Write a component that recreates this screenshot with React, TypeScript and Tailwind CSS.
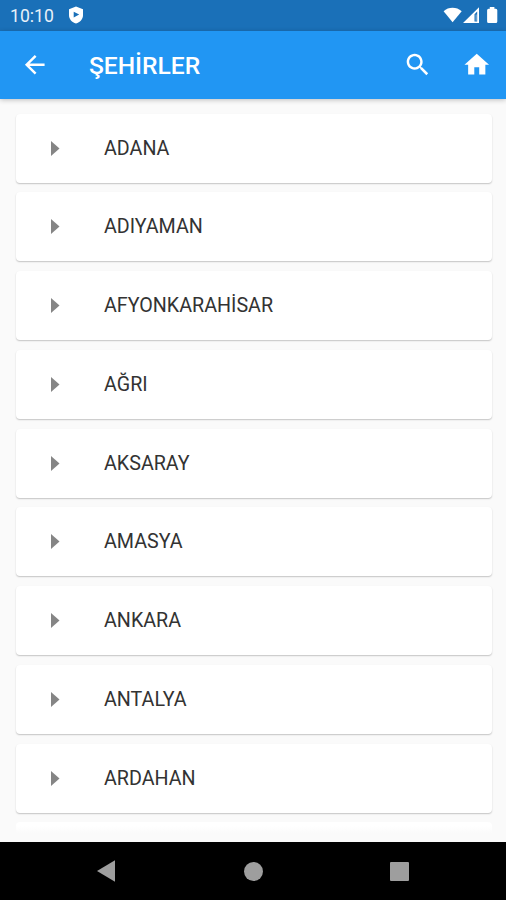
const cities = [
  "ADANA",
  "ADIYAMAN",
  "AFYONKARAHİSAR",
  "AĞRI",
  "AKSARAY",
  "AMASYA",
  "ANKARA",
  "ANTALYA",
  "ARDAHAN",
];

function StatusBar() {
  return (
    <div className="flex h-[30.5px] shrink-0 items-center bg-[#1a70b8] pr-[7px] pl-[10px] text-[#e8f1f9]">
      <span className="w-[58px] pt-px text-[17.6px] leading-[30px]">10:10</span>
      <svg width="16" height="18" viewBox="0 0 16 18">
        <path
          fill="#fff"
          fillRule="evenodd"
          d="M8 .6 15 3.2v6c0 4-3 7-7 8.300C4 16.200 1 13.200 1 9.200v-6ZM5.700 5.800v5.600L11.200 8.600Z"
        />
      </svg>
      <div className="ml-auto flex items-center">
        <svg width="56" height="18" viewBox="0 0 56 18" fill="#fff">
          <path d="M.6 5.200C5.500.600 13.500.600 18.700 5.200L9.600 16.300Z" />
          <path
            fillRule="evenodd"
            d="M20 17 36 1.200V17ZM31.500 8.300v7.100h2.700V5.600Z"
          />
          <path fill="#b4d0e8" d="M32.700 8.500h.8v6.200h-.8Z" />
          <path d="M46.800 1h4.600v1.700h1.400q1.500 0 1.500 1.500v11.400q0 1.500-1.500 1.500h-7.200q-1.500 0-1.500-1.500V4.200q0-1.500 1.500-1.500h1.200Z" />
        </svg>
      </div>
    </div>
  );
}

function AppBar() {
  return (
    <header className="relative z-10 flex h-[68.5px] shrink-0 items-center bg-[#2196f3] pr-[14.5px] pl-[20.4px] text-white shadow-[0_1px_5px_rgba(0,0,0,0.24)]">
      <svg width="29.5" height="29.5" viewBox="0 0 24 24" fill="currentColor">
        <path d="M20 11H7.830l5.590-5.590L12 4l-8 8 8 8 1.410-1.410L7.830 13H20z" />
      </svg>
      <h1 className="ml-[39px] pt-[2px] text-[24.6px] leading-[30px] font-medium">ŞEHİRLER</h1>
      <svg className="ml-auto" width="29.5" height="29.5" viewBox="0 0 24 24" fill="currentColor">
        <path d="M15.500 14h-.790l-.280-.270C15.410 12.590 16 11.110 16 9.500 16 5.910 13.090 3 9.500 3S3 5.910 3 9.500 5.910 16 9.500 16c1.610 0 3.090-.590 4.230-1.570l.270.280v.790l5 4.990L20.490 19zm-6 0C7.010 14 5 11.990 5 9.500S7.010 5 9.500 5 14 7.010 14 9.500 11.990 14 9.500 14" />
      </svg>
      <svg className="ml-[30px]" width="29.5" height="29.5" viewBox="0 0 24 24" fill="currentColor">
        <path d="M10 20v-6h4v6h5v-8h3L12 3 2 12h3v8z" />
      </svg>
    </header>
  );
}

function CityCard({ name }: { name: string }) {
  return (
    <li className="flex h-[69px] shrink-0 items-center rounded-[4px] bg-white pl-[35.5px] shadow-[0_1px_1.5px_rgba(0,0,0,0.22)]">
      <svg width="9" height="15" viewBox="0 0 9 15" fill="#858585">
        <path d="M0 0 8.500 7.500 0 15Z" />
      </svg>
      <span className="ml-[44px] pt-px text-[19.7px] leading-[24px] text-[#333]">{name}</span>
    </li>
  );
}

function NavBar() {
  return (
    <nav className="flex h-[58px] shrink-0 items-center bg-black pl-[97px]">
      <svg width="18" height="22" viewBox="0 0 18 22" fill="#9e9e9e">
        <path d="M0 11 18 .3V21.700Z" />
      </svg>
      <div className="ml-[129px] size-[19px] rounded-full bg-[#9e9e9e]" />
      <div className="ml-[126.5px] size-[19px] rounded-[1px] bg-[#9e9e9e]" />
    </nav>
  );
}

export default function App() {
  return (
    <div className="flex h-[900px] w-[506px] flex-col overflow-hidden bg-[#fafafa] font-['Roboto',sans-serif]">
      <StatusBar />
      <AppBar />
      <main className="min-h-0 flex-1 overflow-hidden">
        <ul className="flex h-[735px] flex-col gap-[9.75px] overflow-hidden pt-[14.5px] pr-[14px] pl-[15.5px]">
          {cities.map((name) => (
            <CityCard key={name} name={name} />
          ))}
          <li className="h-[11px] shrink-0 rounded-t-[4px] bg-linear-to-b from-white from-40% to-[#fafafa]" />
        </ul>
      </main>
      <NavBar />
    </div>
  );
}
